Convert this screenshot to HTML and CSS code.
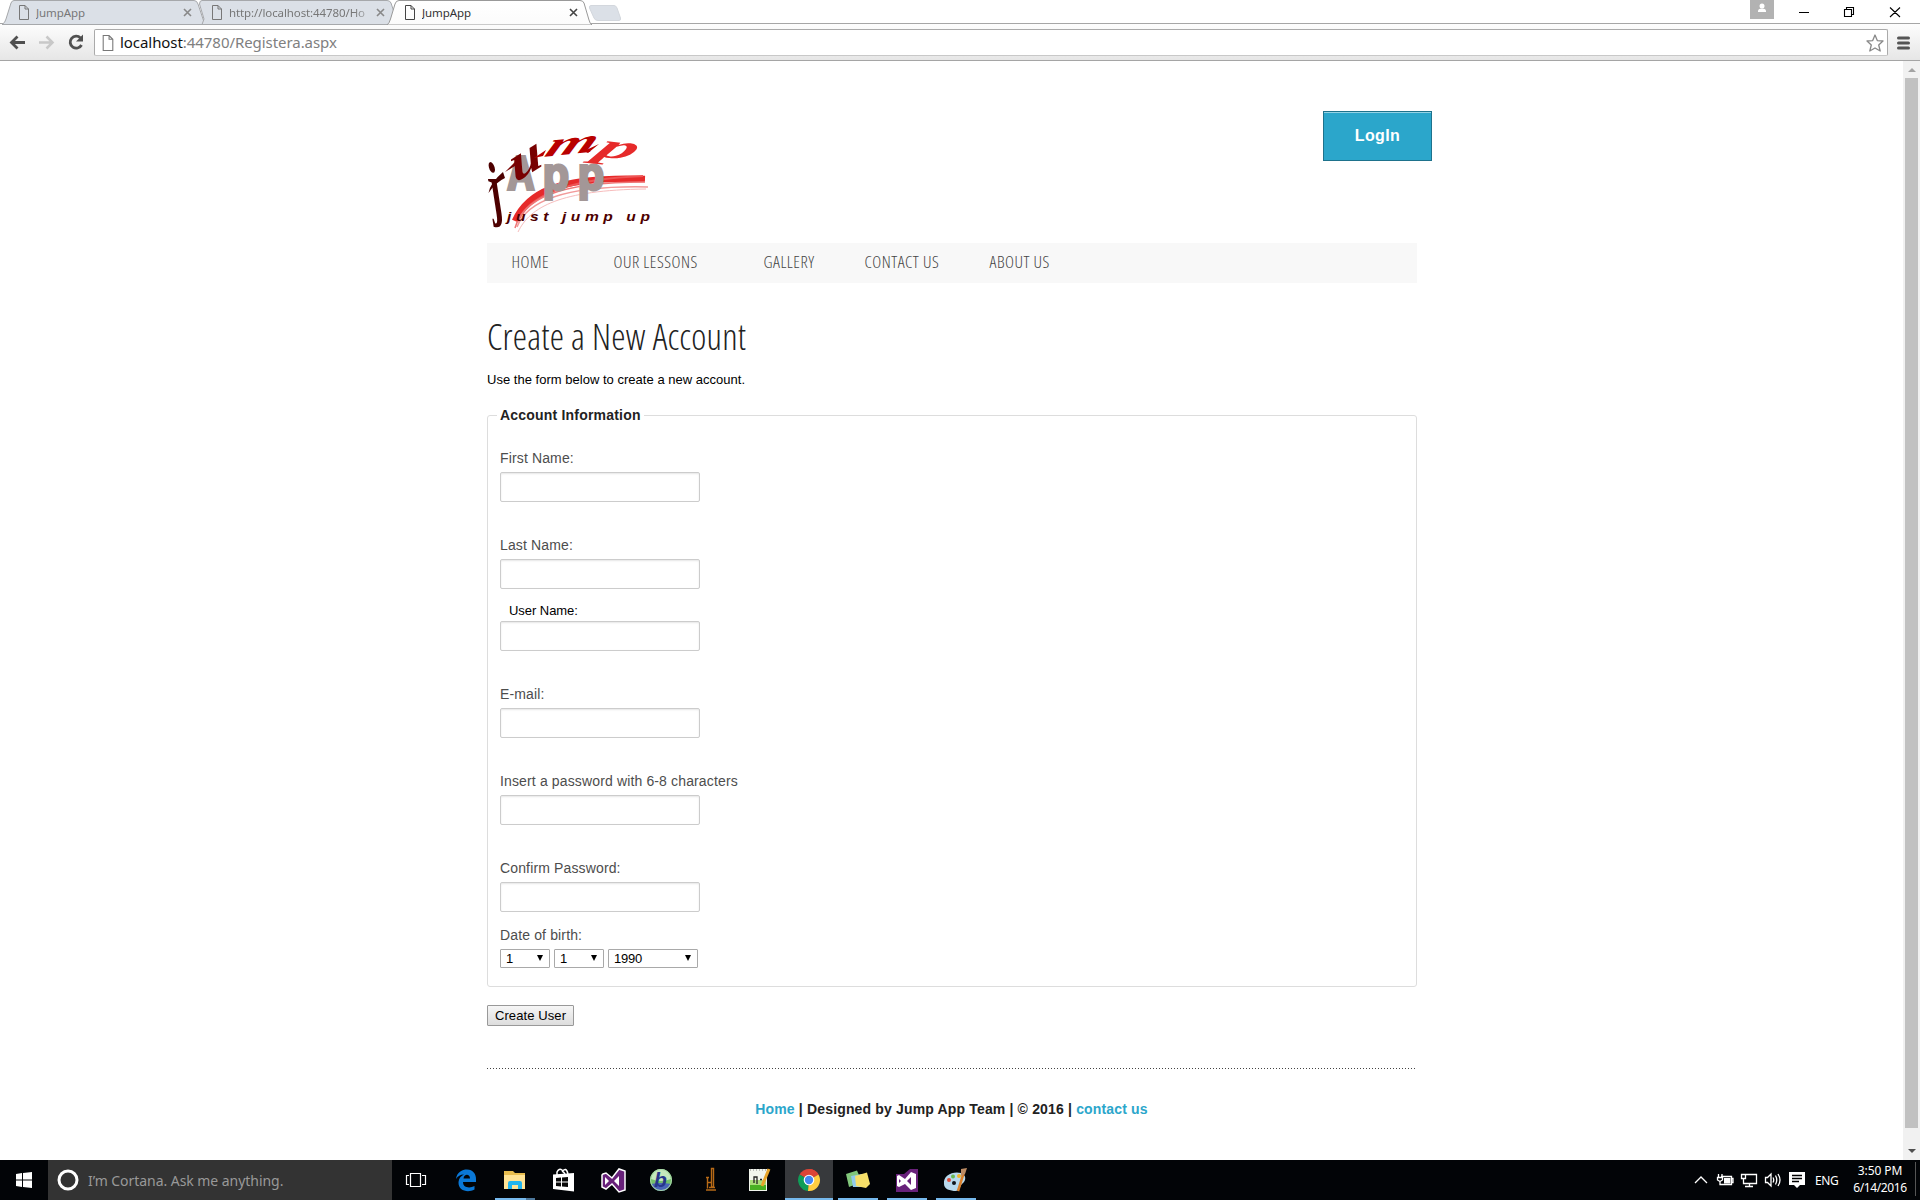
FILE: index.html
```html
<!DOCTYPE html>
<html lang="en">
<head>
<meta charset="utf-8">
<title>JumpApp</title>
<link rel="stylesheet" href="styles.css">
</head>
<body>
<div class="screen">
  <header class="chrome">
    <div class="tabstrip">
      <svg class="tab-shapes" width="640" height="25" viewBox="0 0 640 25">
        <defs><linearGradient id="tg" x1="0" y1="0" x2="0" y2="1"><stop offset="0" stop-color="#fff"/><stop offset="1" stop-color="#fbfbfb"/></linearGradient></defs>
        <path d="M2 24.5Q5 23 6 19L11 3Q12 .5 14 .5H194Q197 .5 198 4L203 19Q204 24 207 24.5Z" fill="#dbe0e7" stroke="#a6a8ab"/>
        <path d="M202 24.5L204 19L199.500 4Q199.500 .5 202 .5H387Q390 .5 391 3L394 12L389 24.500Z" fill="#dbe0e7" stroke="#a6a8ab"/>
        <path d="M387 25Q389.500 23 390.500 19L395 4Q396 .5 399 .5H580Q583 .5 584 3L589 20Q590 24 592 25Z" fill="url(#tg)" stroke="#999"/>
        <path d="M591 5.500H614Q616 5.500 617 8L620.500 18Q621 20.500 619 20.500H598Q595 20.500 594 18L589.500 8Q589 5.500 591 5.500Z" fill="#dbe0e7" stroke="#d3d7dd"/>
      </svg>
      <div class="tab t1"><svg class="file" viewBox="0 0 10 15"><path d="M.5 .5H6L9.500 4V14.500H.5ZM6 .5V4H9.500"/></svg><span>JumpApp</span><svg class="x" viewBox="0 0 9 9"><path d="M1 1L8 8M8 1L1 8"/></svg></div>
      <div class="tab t2"><svg class="file" viewBox="0 0 10 15"><path d="M.5 .5H6L9.500 4V14.500H.5ZM6 .5V4H9.500"/></svg><span>http://localhost:44780/Ho</span><svg class="x" viewBox="0 0 9 9"><path d="M1 1L8 8M8 1L1 8"/></svg></div>
      <div class="tab t3"><svg class="file" viewBox="0 0 10 15"><path d="M.5 .5H6L9.500 4V14.500H.5ZM6 .5V4H9.500"/></svg><span>JumpApp</span><svg class="x" viewBox="0 0 9 9"><path d="M1 1L8 8M8 1L1 8"/></svg></div>
      <svg class="winctl" width="170" height="24" viewBox="0 0 170 24">
        <path fill="#b2b2b2" d="M0 0H24V19H0Z"/><circle cx="12" cy="6" r="2.500" fill="#fff"/><path fill="#fff" d="M8 12V10.500Q8.500 8.500 12 8.500T16 10.500V12Z"/>
        <path d="M49 12.500H59M94.500 9.500H101.500V16.500H94.500ZM96.500 9V7.500H103.500V14.500H102M140 7.500L150 17M150 7.500L140 17" fill="none" stroke="#000" stroke-width="1.100"/>
      </svg>
    </div>
    <div class="toolbar">
      <svg class="navbtns" width="94" height="35" viewBox="0 0 94 35">
        <path d="M25 18.500H12M17.500 12.500L11.500 18.500L17.500 24.500" fill="none" stroke="#505050" stroke-width="2.800"/>
        <path d="M39 18.500H52M46.500 12.500L52.500 18.500L46.500 24.500" fill="none" stroke="#c8c8c8" stroke-width="2.500"/>
        <path d="M80.500 14A6 6 0 1 0 81.500 21" fill="none" stroke="#505050" stroke-width="2.800"/><path d="M83 10.500V17.500H76Z" fill="#505050"/>
      </svg>
      <div class="address">
        <svg class="file big" viewBox="0 0 10 15"><path d="M.5 .5H6L9.500 4V14.500H.5ZM6 .5V4H9.500"/></svg>
        <span class="url"><b>localhost</b>:44780/Registera.aspx</span>
        <svg class="star" width="18" height="18" viewBox="0 0 18 18"><path d="M9 1L11.300 6.600L17 7L12.700 11L14.200 17L9 14L3.800 17L5.300 11L1 7L6.700 6.600Z" fill="none" stroke="#888" stroke-width="1.300" stroke-linejoin="round"/></svg>
      </div>
      <svg class="burger" width="13" height="14" viewBox="0 0 13 14"><path d="M1.500 2H11.500M1.500 7H11.500M1.500 12H11.500" stroke="#555" stroke-width="3" stroke-linecap="round"/></svg>
    </div>
  </header>

  <div class="viewport">
    <div class="page">
      <div class="banner">
        <svg class="logo" width="190" height="120" viewBox="0 0 190 120">
          <g fill="none">
            <path d="M35 101C47 74 75 56 165 59" stroke="#e62a2a" stroke-width="6.500"/>
            <path d="M39 99C51 75 90 59 163 56" stroke="#ee5555" stroke-width="2"/>
            <path d="M37 107C45 86 75 65 168 67" stroke="#f29a9a" stroke-width="1.500"/>
            <path d="M38 112C50 87 80 70 166 69" stroke="#f7bcbc" stroke-width="1"/>
            <path d="M35 108C43 80 75 62 165 62" stroke="#ee7777" stroke-width="1.500"/>
          </g>
          <text class="logo-app" x="27" y="70">App</text>
          <text class="logo-jump" fill="#4d0000" transform="translate(15 92) skewX(14) scale(.8 1.500)">j</text>
          <path d="M8.500 73Q10 63 23 52L25 58Q16 62 8.500 73Z" fill="#4d0000"/>
          <text class="logo-jump" fill="#780000" transform="translate(35 63) rotate(-32) skewX(-16) scale(1.300 1)">u</text>
          <path d="M25 52L36 41L35 46Z" fill="#780000"/>
          <text class="logo-jump" fill="#b90000" transform="translate(63 37) rotate(-6) skewX(-30) scale(1.350 .7)">m</text>
          <path d="M54 38L66 30L63 36ZM104 31L119 24L108 33Z" fill="#b90000"/>
          <text class="logo-jump" fill="#e62a2a" transform="translate(113 36) rotate(6) skewX(-30) scale(1.600 .73)">p</text>
          <text class="logo-tag" transform="translate(27 101) scale(1.300 1)" textLength="110">just jump up</text>
        </svg>
        <a class="login">LogIn</a>
      </div>
      <nav class="menu"><a class="m1">HOME</a><a class="m2">OUR LESSONS</a><a class="m3">GALLERY</a><a class="m4">CONTACT US</a><a class="m5">ABOUT US</a></nav>
      <h1>Create a New Account</h1>
      <p class="intro">Use the form below to create a new account.</p>
      <fieldset>
        <legend>Account Information</legend>
        <div class="field"><label>First Name:</label><input type="text"></div>
        <div class="field"><label>Last Name:</label><input type="text"></div>
        <div class="field user"><label>User Name:</label><input type="text"></div>
        <div class="field"><label>E-mail:</label><input type="text"></div>
        <div class="field"><label>Insert a password with 6-8 characters</label><input type="password"></div>
        <div class="field"><label>Confirm Password:</label><input type="password"></div>
        <div class="birth"><label>Date of birth:</label>
          <div class="selects"><span class="sel">1<i></i></span><span class="sel">1<i></i></span><span class="sel year">1990<i></i></span></div>
        </div>
      </fieldset>
      <button class="create">Create User</button>
      <footer><a>Home</a> | Designed by Jump App Team | © 2016 | <a>contact us</a></footer>
    </div>
    <div class="scrollbar"><i class="up"></i><div class="thumb"></div><i class="down"></i></div>
  </div>

  <div class="taskbar">
    <svg class="start" width="48" height="40" viewBox="0 0 48 40"><path fill="#fff" d="M16 14L22 13V19.500H16ZM23 13L32 12V19.500H23ZM16 20.500H22V27L16 26ZM23 20.500H32V28L23 27Z"/></svg>
    <div class="cortana"><svg width="22" height="22" viewBox="0 0 22 22"><circle cx="11" cy="11" r="9" fill="none" stroke="#fff" stroke-width="3"/></svg><span>I’m Cortana. Ask me anything.</span></div>
    <svg class="apps" width="608" height="40" viewBox="392 0 608 40">
      <path d="M410.500 13.500H420.500V26.500H410.500ZM409 15.500H406.500V24.500H409M422 15.500H425.500V24.500H422" fill="none" stroke="#fff" stroke-width="1.200"/>
      <path fill="#0a78d7" d="M456 19C457 12 462 9.500 467 9.500C473 9.500 476 14 476 19V22H463C463 28 470 28.500 474.500 26V29.500C468 33 458 31 458.500 22C459 18 461 16 464 14.500C460 14.500 458 16 456 19ZM463.500 18.500H470C470 13.500 464 13.500 463.500 18.500Z"/>
      <path fill="#e8bd4e" d="M504 11H513L515 13H525V28H504Z"/><path fill="#ffe394" d="M504 15H525V29H504Z"/><path fill="#22b5ee" d="M508 29V23Q508 21 510 21H520Q522 21 522 23V29H518V25H512V29Z"/>
      <path fill="#fff" d="M553 14.500L574 13V31.500L553 29Z"/><path d="M557 15V12Q559 8 562 10L565 14M562 12Q566 6 568 14" stroke="#fff" fill="none" stroke-width="1.500"/><path fill="#080808" d="M556 18L561 17.500V21.500H556ZM562 17.500L568 17V21.500H562ZM556 22.500H561V26.500L556 26ZM562 22.500H568V27L562 26.500Z"/>
      <path d="M603 14L606 13L612 18L619 9L625 11V30L619 32L612 24L606 29L602 27V15Z" fill="#68217a" stroke="#fff" stroke-width="1.500"/><path fill="#fff" d="M605 17L609 21L605 25ZM619 16V26L614 21Z"/>
      <circle cx="661" cy="20" r="11" fill="#74c06a"/><path d="M651 19Q653 9 661 9T671 19Q661 23 651 19" fill="#c4e8bc"/><path d="M651 24Q661 22 671 24Q668 31 661 31Q654 31 651 24" fill="#4a64b8"/><text x="654" y="27" class="bglyph">b</text><circle cx="661" cy="20" r="10.500" fill="none" stroke="#a7d5a8"/>
      <path d="M711.500 8.500H713.500V27H711.500ZM707.500 17V28.500M706 17.500H709M707.500 22.500H711M706 30H716M709 27.500H715" stroke="#b76a17" fill="none" stroke-width="1.400"/>
      <path fill="#f1f5ed" d="M749 9H767V31H749Z"/><path fill="#a8dc78" d="M750 20H766V30H750Z"/><path fill="#48b023" d="M750 25H766V30H750Z"/><path d="M754 23V17H757V24M760 19.500H762M764 19.500H766" fill="none" stroke="#222" stroke-width="1.300"/><path d="M769 9L762 26" stroke="#e8a52b" stroke-width="3"/><path d="M750 10H768" stroke="#888" stroke-dasharray="1 2"/>
      <path fill="#37393c" d="M785 0H833V40H785Z"/>
      <path fill="#db4437" d="M809 20L799.500 14.500A11 11 0 0 1 818.500 14.500Z"/><path fill="#0f9d58" d="M809 20L808 31A11 11 0 0 1 799.500 14.500Z"/><path fill="#ffcd40" d="M809 20L818.500 14.500A11 11 0 0 1 808 31Z"/><path fill="#db4437" d="M809 9A11 11 0 0 1 818.500 14.500H809Z"/><circle cx="809" cy="20" r="5.300" fill="#fff"/><circle cx="809" cy="20" r="4.200" fill="#4587f3"/>
      <path fill="#81c77b" d="M846 14L857 10.500L862 22L849 27Z"/><path fill="#91cbed" d="M851 16L862 14L864 27L853 27Z"/><path fill="#f6df69" d="M855 16L867 12.500L870 24L866 28L856 26Z"/>
      <path fill="#68217a" d="M896 14H904L910 9H918V32H896Z"/><path fill="#fff" fill-rule="evenodd" d="M897 16L899 15L905 19L911 12L916 14V28L911 30L905 24L899 27L897 26ZM899 19V23L901 21ZM911 17L907 21L911 25Z"/>
      <path fill="#b8d9ed" d="M944 24C943 15 953 11 961 13C966 15 967 20 962 24C959 27 961 30 956 31C950 31 944 29 944 24Z"/><circle cx="949" cy="20" r="2" fill="#e04c38"/><circle cx="953" cy="16.500" r="2" fill="#69b953"/><circle cx="959" cy="16" r="2" fill="#f2b62b"/><circle cx="954" cy="23" r="2" fill="#10151a"/><path d="M964 12L958 31" stroke="#d9812d" stroke-width="2.500"/><path d="M961 9L967 8L965 14L961 16Z" fill="#bc8b63"/>
      <path fill="#76b9ed" d="M495 38H526V40H495ZM785 38H833V40H785ZM838 38H878V40H838ZM887 38H927V40H887ZM936 38H976V40H936Z"/><path fill="#4d789c" d="M526 38H535V40H526Z"/>
    </svg>
    <div class="tray">
      <svg width="115" height="40" viewBox="1693 0 115 40" fill="none" stroke="#fff" stroke-width="1.300">
        <path d="M1695 23L1701 17L1707 23"/>
        <path d="M1721 16.500H1731.500V24.500H1721M1732 18.500H1733V22.500H1732M1718.500 14V17M1722 14V17M1717.500 17.500H1722.500V20L1720 21.500L1717.500 20ZM1720 21V24.500H1722"/><path fill="#fff" stroke="none" d="M1724 18H1730.500V23.500H1724Z"/>
        <path d="M1746 14.500H1756.500V23.500H1743.500V20M1749.500 24V26M1745 26.500H1753M1741.500 14.500H1745.500V18.500H1741.500ZM1743.500 18.500V23"/>
        <path d="M1765.500 17.500H1767.500L1771 14V26L1767.500 22.500H1765.500ZM1773 17.500Q1774.500 20 1773 22.500M1775.500 15.500Q1778 20 1775.500 24.500M1778 14Q1782 20 1778 26"/>
        <path fill="#fff" stroke="none" d="M1789 12H1805V25H1800L1797 28L1794 25H1789Z"/><path stroke="#000" d="M1792 15.500H1802M1792 18.500H1802M1792 21.500H1799"/>
      </svg>
      <span class="lang">ENG</span>
      <div class="clock"><span>3:50 PM</span><span class="date">6/14/2016</span></div>
    </div>
  </div>
</div>
</body>
</html>
```
FILE: styles.css
```css
* { box-sizing: border-box; }
body { margin: 0; background: #fff; font-family: "Liberation Sans", Arial, sans-serif; overflow: hidden; }
.screen { width: 1920px; height: 1200px; display: flex; flex-direction: column; }
svg { display: block; flex: none; }

/* browser window */
.chrome { height: 61px; font-family: "Noto Sans", sans-serif; }
.tabstrip { height: 24px; position: relative; display: flex; border-bottom: 1px solid #a6a6a6; }
.tab-shapes { position: absolute; left: 0; top: 0; z-index: 1; }
.tab { position: relative; z-index: 2; display: flex; align-items: center; height: 24px; padding-top: 1px; font-size: 11.500px; letter-spacing: -.1px; color: #777; }
.tab span { flex: 1; margin-left: 7px; white-space: nowrap; overflow: hidden; }
.t1 { width: 173px; margin: 0 18px 0 19px; }
.t2 { width: 173px; margin-left: 2px; }
.t2 span { -webkit-mask-image: linear-gradient(90deg, #000 85%, transparent); }
.t3 { width: 173px; margin-left: 20px; color: #333; }
.file { width: 10px; height: 15px; fill: none; stroke: #777; }
.file.big { width: 12px; height: 16px; }
.x { width: 9px; height: 9px; stroke: #888; stroke-width: 1.600; }
.t3 .x, .t3 .file { stroke: #444; }
.winctl { position: absolute; left: 1750px; top: 0; }
.toolbar { height: 37px; display: flex; align-items: flex-start; background: linear-gradient(#fdfdfd, #e6e6e6); border-bottom: 1px solid #a5a5a5; }
.address { width: 1794px; height: 27px; margin-top: 5px; display: flex; align-items: center; background: #fff; border: 1px solid #aaa; border-bottom-color: #c8c8c8; border-radius: 2px; padding: 0 3px 0 7px; }
.url { flex: 1; margin: -2px 0 0 6px; font-size: 15px; letter-spacing: -.06px; color: #808080; }
.url b { font-weight: 400; color: #111; }
.burger { margin: 12px 0 0 9px; }

.viewport { height: 1099px; display: flex; }
.page { width: 930px; margin-left: 487px; display: flex; flex-direction: column; }
.banner { height: 182px; display: flex; justify-content: space-between; padding-top: 50px; margin-right: -15px; }
.logo { margin: 9px 0 0 -7px; overflow: visible; }
.logo-app { font: bold 46px "DejaVu Sans Mono", monospace; letter-spacing: 7.300px; fill: #a39797; stroke: #a39797; stroke-width: 2px; }
.logo-jump { font: italic bold 48px "Liberation Serif", serif; }
.logo-tag { font: italic bold 12px "Liberation Sans", sans-serif; fill: #4d0000; }
.login { width: 109px; height: 50px; background: #2ba6cb; border: 1px solid #1e728c; box-shadow: inset 0 1px 0 rgba(255,255,255,.5); color: #fff; font-size: 16px; letter-spacing: .4px; font-weight: bold; line-height: 47px; text-align: center; }
.menu { height: 40px; background: #f8f8f8; display: flex; font: 300 17px/38px "Open Sans", sans-serif; font-stretch: 75%; letter-spacing: .5px; color: #444; padding-left: 24.500px; white-space: nowrap; }
.m1 { width: 102px; }
.m2 { width: 150px; }
.m3 { width: 101px; }
.m4 { width: 125px; }
h1 { margin: 29px 0 0; font: 300 36px/50px "Open Sans", sans-serif; font-stretch: 75%; letter-spacing: .22px; color: #222; white-space: nowrap; }
.intro { margin: 9px 0 0; height: 17px; font-size: 13px; letter-spacing: .02px; line-height: 17px; }
fieldset { margin: 19px 0 0; height: 580px; border: 1px solid #ddd; border-radius: 3px; padding: 0 12px; min-width: 0; }
legend { margin-left: -3px; padding: 0 3px; font-size: 14px; letter-spacing: .2px; line-height: 16px; font-weight: bold; color: #222; }
.field { height: 87px; padding-top: 25px; }
.field label, .birth label { display: block; font-size: 14px; letter-spacing: .14px; line-height: 21px; height: 24px; color: #4d4d4d; }
.field input { display: block; width: 200px; height: 30px; border: 1px solid #ccc; border-radius: 2px; box-shadow: inset 0 1px 2px rgba(0,0,0,.1); padding: 0; }
.field.user { height: 62px; padding-top: 3px; }
.field.user label { margin-left: 9px; height: 21px; font-size: 13px; letter-spacing: -.05px; color: #000; }
.birth { padding-top: 5px; }
.selects { display: flex; gap: 4px; }
.sel { width: 50px; height: 19px; border: 1px solid #a9a9a9; border-radius: 1px; display: flex; align-items: center; justify-content: space-between; padding: 0 6px 1px 5px; font-size: 13px; letter-spacing: -.2px; }
.sel.year { width: 90px; }
.sel i { border: 3px solid transparent; border-top: 6px solid #000; border-bottom: 0; }
.create { width: 87px; height: 21px; margin-top: 18px; padding: 0; border: 1px solid #999; border-radius: 1px; background: linear-gradient(#f6f6f6, #ddd); font: 13px "Liberation Sans", sans-serif; letter-spacing: .1px; color: #000; }
footer { margin-top: 42px; background: repeating-linear-gradient(90deg, #444 0 1px, transparent 1px 3px) top / 100% 1px no-repeat; padding: 32px 1px 0 0; text-align: center; font-size: 14px; letter-spacing: .16px; line-height: 18px; font-weight: bold; color: #222; }
footer a { color: #2ba6cb; }
.scrollbar { width: 17px; margin-left: auto; background: #f1f1f1; display: flex; flex-direction: column; align-items: center; }
.scrollbar i { border: 4px solid transparent; }
.scrollbar .up { border-top: 0; border-bottom-color: #a3a3a3; margin: 7px 0 6px; }
.scrollbar .down { border-bottom: 0; border-top-color: #505050; margin-top: 21px; }
.thumb { width: 13px; height: 1050px; background: #c1c1c1; }

/* desktop taskbar */
.taskbar { height: 40px; background: #020407; display: flex; font-family: "Noto Sans", sans-serif; }
.cortana { width: 344px; background: #333; display: flex; align-items: center; padding-left: 9px; gap: 9px; color: #999; font-size: 14px; letter-spacing: -.05px; white-space: nowrap; }
.bglyph { font: italic bold 21px "Liberation Sans", sans-serif; fill: #26368b; }
.tray { width: 227px; margin-left: auto; display: flex; align-items: center; color: #fff; font-size: 12px; }
.lang { width: 30px; margin-left: 7px; letter-spacing: -.4px; }
.clock { width: 71px; display: flex; flex-direction: column; align-items: center; line-height: 17px; margin-top: -2px; letter-spacing: -.1px; border-right: 1px solid #555; }
.clock .date { letter-spacing: -.4px; }
```
